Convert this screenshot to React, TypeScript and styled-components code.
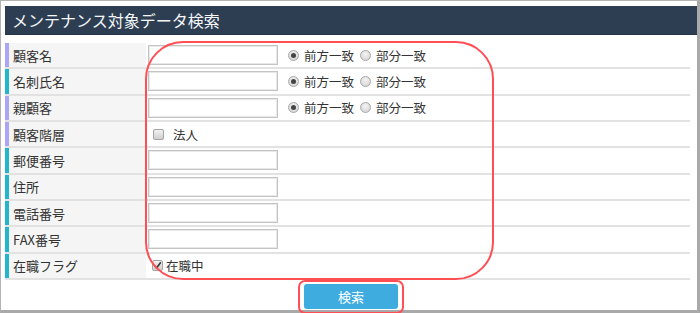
import React from "react";
import styled, { createGlobalStyle } from "styled-components";

const Global = createGlobalStyle`
  html, body { margin: 0; padding: 0; background: #fff; }
  body { font-family: "Noto Sans CJK JP", "Noto Sans", sans-serif; }
  * { box-sizing: border-box; }
`;

const Frame = styled.div`
  position: relative;
  width: 700px;
  height: 313px;
  border-style: solid;
  border-color: #b3b3b3 #a9a9a9 #a9a9a9 #b3b3b3;
  border-width: 1px 3px 3px 1px;
  padding: 5px 0 0 4px;
  background: #fff;
`;

const Header = styled.div`
  height: 29px;
  width: 692px;
  background: #2d3e53;
  border-bottom: 1px solid #25344a;
  color: #f4f6f8;
  font-size: 16px;
  line-height: 28px;
  padding-left: 7px;
`;

const Table = styled.div`
  margin-top: 8px;
  width: 685px;
  display: flex;
  flex-direction: column;
`;

const Row = styled.div`
  display: flex;
  height: 26.33px;
  border-bottom: 2px solid #e2e2e2;
`;

const Label = styled.div<{ $accent: string }>`
  width: 141px;
  flex: none;
  display: flex;
  align-items: center;
  background: #f5f5f5;
  border-left: 4px solid ${(p) => p.$accent};
  padding-left: 4px;
  font-size: 13px;
  color: #333;
`;

const Value = styled.div<{ $pad?: number }>`
  display: flex;
  align-items: center;
  padding-left: ${(p) => p.$pad ?? 2}px;
  font-size: 12.5px;
  color: #333;
`;

const TextInput = styled.input`
  width: 130px;
  height: 20px;
  border: 1px solid #c4c4c4;
  box-shadow: inset 0 0 0 1px #e8e8e8;
  background: #fff;
  margin: 0 10px 0 0;
  padding: 0 3px;
  outline: none;
`;

const RadioWrap = styled.label`
  display: flex;
  align-items: center;
  margin-right: 6px;
`;

const RadioDot = styled.span<{ $on?: boolean }>`
  width: 11px;
  height: 11px;
  border-radius: 50%;
  border: 1px solid #a8a8a8;
  background: radial-gradient(circle at 50% 35%, #f4f4f4, #d0d0d0);
  margin-right: 5px;
  display: inline-flex;
  align-items: center;
  justify-content: center;
  &::after {
    content: "";
    width: 5px;
    height: 5px;
    border-radius: 50%;
    background: ${(p) => (p.$on ? "#444" : "transparent")};
  }
`;

const Box = styled.span`
  width: 11px;
  height: 11px;
  border: 1px solid #a4a4a4;
  border-radius: 2px;
  background: linear-gradient(#f2f2f2, #cfcfcf);
  display: inline-flex;
  align-items: center;
  justify-content: center;
`;

const CheckText = styled.span<{ $gap: number }>`
  margin-left: ${(p) => p.$gap}px;
`;

const Footer = styled.div`
  display: flex;
  justify-content: center;
  width: 692px;
  padding-top: 4px;
`;

const Button = styled.button`
  width: 94px;
  height: 25px;
  border: none;
  border-radius: 3px;
  background: #3eacde;
  color: #fff;
  font-family: "Noto Sans CJK JP", sans-serif;
  font-size: 13px;
  position: relative;
  &::before {
    content: "";
    position: absolute;
    left: -6px;
    right: -6px;
    top: -4px;
    bottom: -5px;
    border: 2px solid #ff4f55;
    border-radius: 7px;
  }
`;

const Highlight = styled.div`
  position: absolute;
  left: 144px;
  top: 40px;
  width: 349px;
  height: 239px;
  border: 2px solid #ff4f55;
  border-radius: 38px;
  pointer-events: none;
`;

const PURPLE = "#aaa5f7";
const TEAL = "#22b6cc";

type RowDef = { label: string; accent: string; kind: "radio" | "input" | "houjin" | "zaishoku" };

const rows: RowDef[] = [
  { label: "顧客名", accent: PURPLE, kind: "radio" },
  { label: "名刺氏名", accent: TEAL, kind: "radio" },
  { label: "親顧客", accent: PURPLE, kind: "radio" },
  { label: "顧客階層", accent: PURPLE, kind: "houjin" },
  { label: "郵便番号", accent: TEAL, kind: "input" },
  { label: "住所", accent: TEAL, kind: "input" },
  { label: "電話番号", accent: TEAL, kind: "input" },
  { label: "FAX番号", accent: TEAL, kind: "input" },
  { label: "在職フラグ", accent: TEAL, kind: "zaishoku" },
];

const Check = () => (
  <svg width="9" height="9" viewBox="0 0 9 9">
    <path d="M1.5 4.5 L3.6 7 L7.8 1.2" stroke="#333" strokeWidth="1.6" fill="none" />
  </svg>
);

function renderValue(r: RowDef) {
  if (r.kind === "radio")
    return (
      <Value>
        <TextInput />
        <RadioWrap>
          <RadioDot $on />
          前方一致
        </RadioWrap>
        <RadioWrap>
          <RadioDot />
          部分一致
        </RadioWrap>
      </Value>
    );
  if (r.kind === "input")
    return (
      <Value>
        <TextInput />
      </Value>
    );
  if (r.kind === "houjin")
    return (
      <Value $pad={7}>
        <Box />
        <CheckText $gap={9}>法人</CheckText>
      </Value>
    );
  return (
    <Value $pad={6}>
      <Box>
        <Check />
      </Box>
      <CheckText $gap={3}>在職中</CheckText>
    </Value>
  );
}

export default function App() {
  return (
    <>
      <Global />
      <Frame>
        <Header>メンテナンス対象データ検索</Header>
        <Table>
          {rows.map((r) => (
            <Row key={r.label}>
              <Label $accent={r.accent}>{r.label}</Label>
              {renderValue(r)}
            </Row>
          ))}
        </Table>
        <Footer>
          <Button>検索</Button>
        </Footer>
        <Highlight />
      </Frame>
    </>
  );
}
